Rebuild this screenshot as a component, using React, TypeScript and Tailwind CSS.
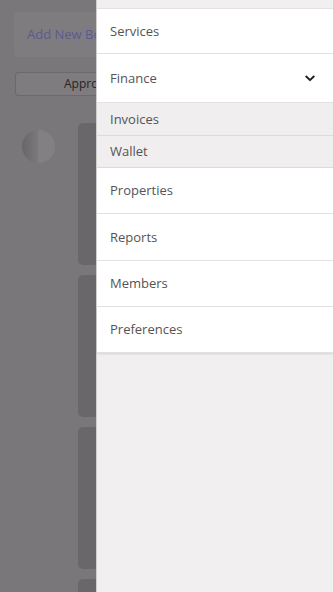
import React from "react";

const font = { fontFamily: '"Open Sans", "Noto Sans", sans-serif' };

function Row({ label, h, chevron }: { label: string; h: string; chevron?: boolean }) {
  return (
    <div className={`flex items-center justify-between bg-white border-b border-[#e3e1e3] pl-[13px] pr-[18px] ${h}`}>
      <span className="text-[13px] text-[#555355] pt-px">{label}</span>
      {chevron && (
        <svg width="10" height="7" viewBox="0 0 10 7" fill="none">
          <path d="M1.3 1.5 5 5.2 8.7 1.5" stroke="#1f1f1f" strokeWidth="1.9" strokeLinecap="round" strokeLinejoin="round" />
        </svg>
      )}
    </div>
  );
}

function SubRow({ label, h }: { label: string; h: string }) {
  return (
    <div className={`flex items-center bg-[#f0eeef] border-b border-[#dcdadc] pl-[13px] ${h}`}>
      <span className="text-[13px] text-[#555355] pt-px">{label}</span>
    </div>
  );
}

export default function App() {
  return (
    <div className="relative w-[333px] h-[592px] overflow-hidden bg-[#7a777a]" style={font}>
      {/* dimmed page behind the drawer */}
      <div className="flex flex-col pl-[14px] pt-[12px]">
        <div className="flex items-center h-[45px] w-[82px] overflow-hidden rounded-l-[4px] bg-[#7f7c7f] pl-[13px]">
          <span className="text-[13px] text-[#5a5a92] whitespace-nowrap">Add New Booking</span>
        </div>
        <div className="mt-[15px] ml-px flex items-center h-[24px] w-[81px] overflow-hidden rounded-l-[4px] border-y border-l border-[#6c696c] bg-[#7f7c7f] pl-[48px]">
          <span className="text-[12px] text-[#262426] whitespace-nowrap">Approved</span>
        </div>
        <div className="mt-[27px] flex gap-[23px]">
          <div className="ml-[8px] mt-[7px] w-[33px] h-[33px] shrink-0 rounded-full bg-[linear-gradient(90deg,#686668_0%,#7c797c_50%,#838083_50%,#838083_100%)]" />
          <div className="flex flex-col gap-[10px]">
            <div className="w-[150px] h-[142px] rounded-[5px] bg-[#6a676a]" />
            <div className="w-[150px] h-[142px] rounded-[5px] bg-[#6a676a]" />
            <div className="w-[150px] h-[142px] rounded-[5px] bg-[#6a676a]" />
            <div className="w-[150px] h-[142px] rounded-[5px] bg-[#6a676a]" />
          </div>
        </div>
      </div>

      {/* drawer */}
      <div className="absolute top-0 bottom-0 left-[96px] right-0 bg-[#f1eff0] border-l border-[#cfcdcf] flex flex-col">
        <div className="h-[9px] border-b border-[#e3e1e3]" />
        <Row label="Services" h="h-[45px]" />
        <Row label="Finance" h="h-[49px]" chevron />
        <SubRow label="Invoices" h="h-[33px]" />
        <SubRow label="Wallet" h="h-[32px]" />
        <Row label="Properties" h="h-[46px]" />
        <Row label="Reports" h="h-[47px]" />
        <Row label="Members" h="h-[46px]" />
        <div className="shadow-[0_1px_2px_rgba(0,0,0,0.12)]">
          <Row label="Preferences" h="h-[46px]" />
        </div>
      </div>
    </div>
  );
}
